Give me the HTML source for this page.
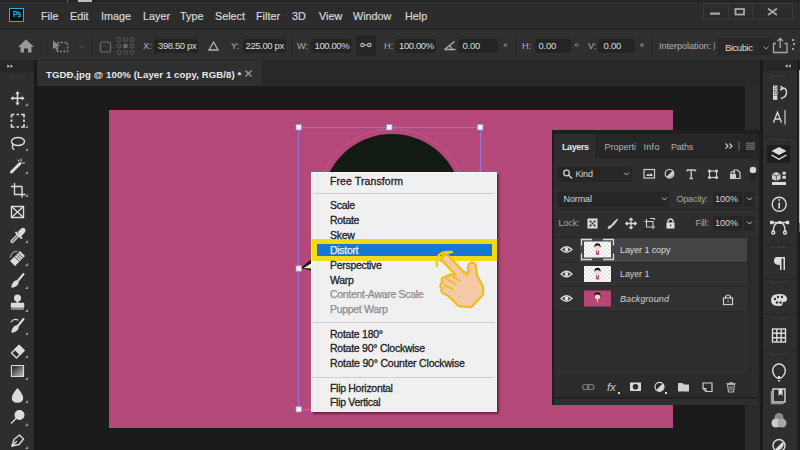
<!DOCTYPE html>
<html><head><meta charset="utf-8">
<style>
*{margin:0;padding:0;box-sizing:border-box}
html,body{width:800px;height:450px;overflow:hidden;background:#1d1d1d;font-family:"Liberation Sans",sans-serif}
.a{position:absolute}
.t{position:absolute;white-space:pre;line-height:1}
#menubar{left:0;top:0;width:800px;height:29px;background:#2c2c2c}
#optbar{left:0;top:29px;width:800px;height:31px;background:#2f2f2f;border-top:1px solid #232323}
#tabbar{left:37px;top:60px;width:723px;height:26px;background:#282828}
#tab{left:37px;top:61px;width:225px;height:25px;background:#303030}
#toolbar{left:0;top:60px;width:34px;height:390px;background:#2e2e2e}
#canvas{left:37px;top:86px;width:708px;height:364px;background:#1b1b1b}
#pink{left:109px;top:110px;width:564px;height:317.5px;background:#b44878}
#rstrip{left:763px;top:60px;width:34px;height:390px;background:#2e2e2e}
.mi{color:#d8d8d8;font-size:10.8px;-webkit-text-stroke:0.2px #d8d8d8}
.ot{color:#b0b0b0;font-size:9.2px}
.inp{position:absolute;background:#242424;border-radius:2px}
.iv{color:#dcdcdc;font-size:9.5px}
</style></head><body>
<div id="menubar" class="a"></div>
<div class="a" style="left:0;top:0;width:800px;height:2px;background:#242424"></div>
<div class="a" style="left:78px;top:0;width:14px;height:1.5px;background:#bdbdbd"></div>
<div class="a" style="left:67px;top:0;width:1px;height:2px;background:#777"></div>
<div id="optbar" class="a"></div>
<div id="toolbar" class="a"></div>
<div id="tabbar" class="a"></div>
<div id="tab" class="a"></div>
<div id="canvas" class="a"></div>
<div id="pink" class="a"></div>
<div id="rstrip" class="a"></div>

<!-- menubar -->
<div class="a" style="left:9px;top:7.8px;width:15px;height:14px;background:#03141f;border:1.5px solid #2bb0d8"></div>
<div class="t" style="left:12.6px;top:10.2px;color:#40c4ec;font-size:9.3px;letter-spacing:-0.4px;transform:scaleX(0.78);transform-origin:0 0;-webkit-text-stroke:0.2px #40c4ec">Ps</div>
<div class="t mi" style="left:41px;top:10.9px">File</div>
<div class="t mi" style="left:70px;top:10.9px">Edit</div>
<div class="t mi" style="left:101px;top:10.9px">Image</div>
<div class="t mi" style="left:143px;top:10.9px">Layer</div>
<div class="t mi" style="left:180px;top:10.9px">Type</div>
<div class="t mi" style="left:215px;top:10.9px">Select</div>
<div class="t mi" style="left:256px;top:10.9px">Filter</div>
<div class="t mi" style="left:292px;top:10.9px">3D</div>
<div class="t mi" style="left:319px;top:10.9px">View</div>
<div class="t mi" style="left:353px;top:10.9px">Window</div>
<div class="t mi" style="left:405px;top:10.9px">Help</div>


<!-- options bar -->
<svg class="a" style="left:0;top:29px" width="800" height="31">
 <g fill="none" stroke="#2a2a2a" stroke-width="1">
  <line x1="47.5" y1="4" x2="47.5" y2="27"/><line x1="91.5" y1="4" x2="91.5" y2="27"/>
  <line x1="292.5" y1="4" x2="292.5" y2="27"/><line x1="515.5" y1="4" x2="515.5" y2="27"/><line x1="651.5" y1="4" x2="651.5" y2="27"/>
 </g>
 <!-- home -->
 <path d="M18 18 L26 10.5 L34 18 L31.5 18 L31.5 23.5 L28 23.5 L28 19.5 L24 19.5 L24 23.5 L20.5 23.5 L20.5 18 Z" fill="#9a9a9a"/>
 <!-- transform icon -->
 <g fill="none" stroke="#8a8a8a" stroke-width="1.3">
  <rect x="57.5" y="13.5" width="10" height="9" stroke-dasharray="2 1.5"/>
 </g>
 <path d="M53 11.5 L60 17 L56.5 17.5 L58.5 21.5 L57 22 L55 18.5 L53 20.5 Z" fill="#8a8a8a"/>
 <path d="M79.5 16.5 L81.5 18.5 L83.5 16.5" fill="none" stroke="#5c5c5c" stroke-width="1"/>
 <!-- checkbox -->
 <rect x="100.5" y="13" width="10" height="10" rx="2" fill="none" stroke="#6a6a6a" stroke-width="1.2"/>
 <!-- ref point grid -->
 <g fill="none" stroke="#5a5a5a" stroke-width="1">
  <circle cx="119" cy="10.5" r="2"/><circle cx="125.5" cy="10.5" r="2"/><circle cx="132" cy="10.5" r="2"/>
  <circle cx="119" cy="17" r="2"/><circle cx="132" cy="17" r="2"/>
  <circle cx="119" cy="23.5" r="2"/><circle cx="125.5" cy="23.5" r="2"/><circle cx="132" cy="23.5" r="2"/>
 </g>
 <rect x="123.5" y="15" width="4" height="4" fill="#6a6a6a"/>
 <!-- triangle -->
 <path d="M213.5 13 L218 21 L209 21 Z" fill="none" stroke="#b0b0b0" stroke-width="1.3"/>
 <!-- link btn -->
 <rect x="356" y="6" width="20" height="21" fill="#242424"/>
 <g fill="none" stroke="#b8b8b8" stroke-width="1.2"><circle cx="362.5" cy="16" r="1.7"/><circle cx="369.3" cy="16" r="1.7"/><line x1="364" y1="16" x2="368" y2="16"/></g>
 <!-- angle icon -->
 <path d="M444.5 20.5 L455.5 20.5 M444.5 20.5 L454.5 12.5 M449.5 16.5 Q451.5 18 451.5 20.5" fill="none" stroke="#b0b0b0" stroke-width="1.3"/>
 <!-- degree -->
 <g fill="none" stroke="#8a8a8a" stroke-width="1"><circle cx="505.5" cy="16" r="1.3"/><circle cx="576.5" cy="16" r="1.3"/><circle cx="642" cy="16" r="1.3"/></g>
 <!-- dropdown bicubic -->
 <rect x="717.5" y="9" width="55" height="17" rx="2" fill="#282828"/>
 <path d="M763.5 17.5 L766 20 L768.5 17.5" fill="none" stroke="#9a9a9a" stroke-width="1"/>
 <path d="M713.5 13 Q716 15 714 17 M713.5 21 Q716 19 714 17" fill="none" stroke="#8a8a8a" stroke-width="1"/>
 <!-- share -->
 <path d="M776 14.5 L773.5 14.5 L773.5 23.5 L787 23.5 L787 14.5 L784.5 14.5 M780.2 19 L780.2 9.5 M777.5 12 L780.2 9.3 L783 12" fill="none" stroke="#a8a8a8" stroke-width="1.3"/>
 <g fill="#a0a0a0"><rect x="792" y="10" width="2" height="2"/><rect x="793" y="14" width="2" height="2"/><rect x="792" y="19" width="2" height="2"/></g>
</svg>
<div class="inp" style="left:154px;top:39px;width:44px;height:14px"></div>
<div class="inp" style="left:243px;top:39px;width:43px;height:14px"></div>
<div class="inp" style="left:311px;top:39px;width:40px;height:14px"></div>
<div class="inp" style="left:396px;top:39px;width:40px;height:14px"></div>
<div class="inp" style="left:459px;top:39px;width:39px;height:14px"></div>
<div class="inp" style="left:535px;top:39px;width:36px;height:14px"></div>
<div class="inp" style="left:598px;top:39px;width:37px;height:14px"></div>
<div class="t ot" style="left:143px;top:42.1px">X:</div>
<div class="t ot" style="left:231px;top:42.1px">Y:</div>
<div class="t ot" style="left:297px;top:42.1px">W:</div>
<div class="t ot" style="left:384px;top:42.1px">H:</div>
<div class="t ot" style="left:522px;top:42.1px">H:</div>
<div class="t ot" style="left:588px;top:42.1px">V:</div>
<div class="t iv" style="left:158px;top:41.3px;letter-spacing:-0.38px">398.50 px</div>
<div class="t iv" style="left:245.5px;top:41.3px;letter-spacing:-0.38px">225.00 px</div>
<div class="t iv" style="left:314.5px;top:41.3px;letter-spacing:-0.38px">100.00%</div>
<div class="t iv" style="left:399px;top:41.3px;letter-spacing:-0.38px">100.00%</div>
<div class="t iv" style="left:462.5px;top:41.3px;letter-spacing:-0.25px">0.00</div>
<div class="t iv" style="left:538.5px;top:41.3px;letter-spacing:-0.25px">0.00</div>
<div class="t iv" style="left:603.5px;top:41.3px;letter-spacing:-0.25px">0.00</div>
<div class="t ot" style="left:659px;top:41.8px;letter-spacing:-0.08px">Interpolation:</div>
<div class="t iv" style="left:725px;top:42.5px;letter-spacing:-0.45px">Bicubic</div>

<!-- window controls -->
<svg class="a" style="left:680px;top:0" width="120" height="29" viewBox="680 0 120 29">
 <rect x="703.5" y="3.5" width="89" height="15.5" fill="none" stroke="#3a3a3a" stroke-width="1"/>
 <line x1="728.5" y1="4" x2="728.5" y2="19" stroke="#383838"/><line x1="752.5" y1="4" x2="752.5" y2="19" stroke="#383838"/>
 <rect x="710" y="12.5" width="10" height="2.2" fill="#a8a8a8"/>
 <rect x="735.5" y="9" width="8.5" height="5.5" fill="none" stroke="#a8a8a8" stroke-width="1.8"/>
 <path d="M768 8.5 L777 15 M777 8.5 L768 15" stroke="#a8a8a8" stroke-width="1.6"/>
</svg>
<!-- toolbar -->
<div class="a" style="left:0;top:60px;width:34px;height:12px;background:#262626"></div>
<div class="a" style="left:34px;top:60px;width:3px;height:390px;background:#1a1a1a"></div>
<svg class="a" style="left:0;top:60px" width="36" height="390" viewBox="0 60 36 390">
 <path d="M7.3 64.5 L9.8 66.2 L7.3 67.9 Z M10.5 64.5 L13 66.2 L10.5 67.9 Z" fill="#c4c4c4"/>
 <g stroke="#434343" stroke-width="1" stroke-dasharray="1 1"><path d="M10 76.5 H26"/></g>
 <g fill="none" stroke="#dcdcdc" stroke-width="1.4" stroke-linecap="round" stroke-linejoin="round">
  <!-- move -->
  <path d="M17.5 93 L17.5 103.5 M12 98.2 L23 98.2" stroke-width="1.6"/>
  <path d="M17.5 91 L15.3 93.8 L19.7 93.8 Z M17.5 105.5 L15.3 102.7 L19.7 102.7 Z M10.5 98.2 L13.3 96 L13.3 100.4 Z M24.5 98.2 L21.7 96 L21.7 100.4 Z" fill="#dcdcdc" stroke="none"/>
  <!-- marquee -->
  <path d="M11.5 114.5 L14.5 114.5 M16.5 114.5 L19 114.5 M21 114.5 L24 114.5 L24 117.5 M24 119.5 L24 122 M24 124 L24 127 L21 127 M19 127 L16.5 127 M14.5 127 L11.5 127 L11.5 124 M11.5 122 L11.5 119.5 M11.5 117.5 L11.5 114.5" stroke-width="1.7" stroke-linecap="butt" stroke-linejoin="miter"/>
  <!-- lasso -->
  <ellipse cx="18" cy="141.5" rx="6.5" ry="4"/>
  <path d="M13 144 Q11.5 148 14 149.5"/>
  <!-- wand -->
  <path d="M11.5 172 L20 163.5" stroke-width="3"/>
  <path d="M21 159 L21 161 M22.5 163 L24.5 163 M18 160 L18.8 161" stroke-width="1.1"/>
  <!-- crop -->
  <path d="M14.5 183.5 L14.5 194.5 L25 194.5 M11.5 186.5 L22 186.5 L22 197"/>
  <!-- frame -->
  <rect x="11.5" y="206.5" width="12" height="11"/>
  <path d="M11.5 206.5 L23.5 217.5 M23.5 206.5 L11.5 217.5"/>
  <!-- eyedropper -->
  <path d="M19.5 235.5 L12.5 242.5 Q11 242.5 11 241 L18 234" stroke-width="1.3"/>
  <path d="M16 232.5 L21.5 238 M19 232 L22 229 Q23.5 228 24.5 229.5 Q25 231 24 232 L21 235 Z" fill="#dcdcdc" stroke-width="1.8"/>
  <!-- healing -->
  <path d="M12.5 263.5 L22.5 253.5" stroke-width="7" stroke-linecap="butt"/>
  <path d="M10.5 257 Q12 251 17 251.5" stroke-width="1" stroke-dasharray="1.2 1"/>
  <!-- brush -->
  <path d="M23.5 274 L17 282" stroke-width="2"/>
  <path d="M16.5 281 Q13 282 12 287 Q16 287 18 283 Z" fill="#dcdcdc"/>
  <!-- stamp -->
  <circle cx="17.5" cy="298" r="2.8" fill="#dcdcdc"/>
  <path d="M17.5 300 L17.5 303" stroke-width="2"/>
  <rect x="11.5" y="303.5" width="12" height="3.5" fill="#dcdcdc"/>
  <path d="M11.5 309 L23.5 309" stroke-width="1.1"/>
  <!-- history brush -->
  <path d="M23.5 319 L17 327" stroke-width="2"/>
  <path d="M16.5 326 Q13 327 12 332 Q16 332 18 328 Z" fill="#dcdcdc"/>
  <path d="M11 322 Q14 318 18 320" stroke-width="1.1"/>
  <!-- eraser -->
  <path d="M11.5 353 L19 345.5 L24 350.5 L16.5 358 Z"/>
  <path d="M15 349.5 L20 354.5 L24 350.5 L19 345.5 Z" fill="#dcdcdc"/>
  <!-- gradient -->
  <rect x="11.5" y="365.5" width="12" height="11" stroke-width="1.2"/>
  <!-- drop -->
  <path d="M17.5 389 Q12.5 395 12.5 398 Q12.5 402 17.5 402 Q22.5 402 22.5 398 Q22.5 395 17.5 389 Z" fill="#dcdcdc"/>
  <!-- dodge -->
  <circle cx="19.5" cy="415" r="4.3" fill="#dcdcdc"/>
  <path d="M16.5 418 L11.5 423"/>
  <!-- pen -->
  <path d="M12 446 L14 439.5 L19.5 435 L23.5 439 L19 444.5 Z"/>
  <path d="M12 446 L16.5 441.5"/>
 </g>
 <g stroke="#323232" stroke-width="0.9"><path d="M14.5 256.5 L19.5 261.5 M16.3 254.7 L21.3 259.7 M18.1 252.9 L23.1 257.9"/></g>
 <defs><linearGradient id="gr" x1="0" y1="0" x2="1" y2="1"><stop offset="0" stop-color="#1e1e1e"/><stop offset="1" stop-color="#bdbdbd"/></linearGradient></defs>
 <rect x="12" y="366" width="11" height="10" fill="url(#gr)"/>
 <g fill="#9a9a9a">
  <path d="M28 106 L28 103 L25 106 Z"/><path d="M28 128 L28 125 L25 128 Z"/><path d="M28 151 L28 148 L25 151 Z"/><path d="M28 174 L28 171 L25 174 Z"/>
  <path d="M28 197 L28 194 L25 197 Z"/><path d="M28 243 L28 240 L25 243 Z"/><path d="M28 266 L28 263 L25 266 Z"/><path d="M28 289 L28 286 L25 289 Z"/>
  <path d="M28 312 L28 309 L25 312 Z"/><path d="M28 335 L28 332 L25 335 Z"/><path d="M28 358 L28 355 L25 358 Z"/><path d="M28 380 L28 377 L25 380 Z"/>
  <path d="M28 403 L28 400 L25 403 Z"/><path d="M28 426 L28 423 L25 426 Z"/><path d="M28 449 L28 446 L25 449 Z"/>
 </g>
</svg>
<!-- tab close -->
<svg class="a" style="left:244px;top:69px" width="10" height="10"><path d="M1.5 1.5 L7.5 7.5 M7.5 1.5 L1.5 7.5" stroke="#a0a0a0" stroke-width="1.2"/></svg>
<!-- canvas scrollbar col -->
<div class="a" style="left:745px;top:86px;width:15px;height:364px;background:#2a2a2a"></div>
<div class="a" style="left:760px;top:60px;width:3px;height:390px;background:#1a1a1a"></div>
<!-- right strip -->
<div class="a" style="left:763px;top:60px;width:34px;height:11px;background:#262626"></div>
<div class="a" style="left:797px;top:60px;width:3px;height:390px;background:#1e1e1e"></div>
<div class="a" style="left:798.5px;top:70px;width:1.5px;height:153px;background:#c4c4c4"></div>
<div class="a" style="left:798.5px;top:223px;width:1.5px;height:9px;background:#3d6fa8"></div>
<div class="a" style="left:767px;top:144.5px;width:23px;height:18px;background:#1e1e1e"></div>
<svg class="a" style="left:760px;top:60px" width="40" height="390" viewBox="760 60 40 390">
 <path d="M787.5 64.3 L785 66 L787.5 67.7 Z M790.7 64.3 L788.2 66 L790.7 67.7 Z" fill="#c4c4c4"/>
 <g stroke="#262626" stroke-width="1"><line x1="763" y1="137" x2="797" y2="137"/><line x1="763" y1="244.5" x2="797" y2="244.5"/><line x1="763" y1="279" x2="797" y2="279"/><line x1="763" y1="314.5" x2="797" y2="314.5"/><line x1="763" y1="350" x2="797" y2="350"/></g>
 <g stroke="#474747" stroke-width="1" stroke-dasharray="1 1"><path d="M771 76.5 H787 M771 139.5 H787 M771 247.5 H787 M771 282.5 H787 M771 318.5 H787 M771 354.5 H787"/></g>
 <g fill="#dcdcdc" stroke="none">
  <!-- history -->
  <rect x="773" y="95.5" width="4.3" height="4.3"/><circle cx="775.2" cy="87.8" r="1"/><circle cx="775.2" cy="92.8" r="1"/>
 </g>
 <g fill="none" stroke="#dcdcdc" stroke-width="1.4">
  <rect x="773.5" y="86" width="3.5" height="3.6" stroke-width="1"/><rect x="773.5" y="91" width="3.5" height="3.6" stroke-width="1"/>
  <path d="M781 88.5 Q786 86.5 786.5 92 Q786.5 97 781 98.5"/>
  <path d="M780.5 86 L783 88.5 L780 90"/>
  <!-- A| -->
  <path d="M773.5 122.5 L777.5 112.3 L781.5 122.5 M775 119 L780 119" stroke-width="1.3"/>
  <line x1="785" y1="110" x2="785" y2="124.5" stroke-width="1.1"/>
  <!-- info -->
  <circle cx="779.2" cy="204.2" r="7"/>
  <line x1="779.2" y1="202.5" x2="779.2" y2="208.5" stroke-width="1.6"/>
  <!-- path -->
  <path d="M773.3 231 Q773.5 222.5 779.5 222.5 Q785 222.5 785 231"/>
  <line x1="772" y1="222.5" x2="787" y2="222.5"/>
  <circle cx="773.3" cy="232.5" r="1.5"/><circle cx="785" cy="232.5" r="1.5"/>
  <!-- grid -->
  <rect x="772.5" y="329" width="13" height="13"/>
  <path d="M776.8 329 L776.8 342 M781.2 329 L781.2 342 M772.5 333.3 L785.5 333.3 M772.5 337.7 L785.5 337.7"/>
  <!-- bulb -->
  <path d="M777 378 Q771.5 374 773 368.5 Q775 364 779 364 Q783 364 785 368.5 Q786.5 374 781 378 Z"/>
  <!-- book -->
  <rect x="773" y="389" width="12" height="13"/>
  <path d="M771.5 391 L771.5 403.5 L783.5 403.5" stroke="#9a9a9a"/>
  <!-- half circle -->
  <circle cx="779" cy="445.5" r="6"/>
 </g>
 <g fill="#dcdcdc">
  <circle cx="779.2" cy="200" r="1"/>
  <rect x="770" y="220.8" width="3.4" height="3.4"/><rect x="785.8" y="220.8" width="3.4" height="3.4"/><rect x="778.2" y="221" width="2.8" height="3"/>
  <!-- layers icon -->
  <path d="M779 147 L786.5 151 L779 155 L771.5 151 Z"/>
  <path d="M772 154.5 L779 158.5 L786 154.5 L787 155.5 L779 160 L771 155.5 Z"/>
  <!-- 3d -->
  <path d="M772 174 L776.3 172 L780.6 174 L780.6 179 L776.3 181 L772 179 Z" fill="#cfcfcf"/>
  <path d="M772 174 L776.3 176 L780.6 174 M776.3 176 L776.3 181" fill="none" stroke="#3a3a3a" stroke-width="0.8"/>
  <rect x="782.5" y="171.8" width="3.3" height="2.7"/><rect x="782.5" y="175.8" width="3.3" height="3"/><rect x="772" y="182" width="14" height="3"/>
  <!-- pilcrow -->
  <path d="M777 257 L785 257 L785 270 L783.5 270 L783.5 258.5 L781.5 258.5 L781.5 270 L780 270 L780 265 Q774 265 774 261 Q774 257 777 257 Z"/>
  <!-- palette -->
  <path d="M779 294 Q787 294 787 299 Q787 302 784 302 Q782 302 782.5 304 Q782.5 306 779 306 Q771 306 771 300 Q771 294 779 294 Z"/>
  <rect x="778" y="376" width="2" height="3"/>
  <path d="M777.5 380 L780.5 380 L779 382 Z"/>
 </g>
 <g fill="#323232"><circle cx="775" cy="299" r="1.2"/><circle cx="778" cy="297" r="1.2"/><circle cx="782" cy="297" r="1.2"/><circle cx="777" cy="302.5" r="1.2"/><circle cx="780.5" cy="302.5" r="1.2"/></g>
 <path d="M778.5 389 L778.5 396 L780.5 394 L782.5 396 L782.5 389 Z" fill="#dcdcdc"/>
 <!-- color circles -->
 <g opacity="0.85"><circle cx="779" cy="417.5" r="4.5" fill="#9a9a9a"/><circle cx="776" cy="423" r="4.5" fill="#e8e8e8"/><circle cx="782" cy="423" r="4.5" fill="#bdbdbd"/></g>
 <path d="M775 449.5 L783 441.5 A6 6 0 0 1 775 449.5 Z" fill="#dcdcdc"/>
</svg>
<!-- tab -->
<div class="t" style="left:46px;top:70px;color:#e8e8e8;font-size:9.6px;font-weight:bold;letter-spacing:0.1px">TGDĐ.jpg @ 100% (Layer 1 copy, RGB/8) *</div>

<!-- layers panel -->
<div class="a" style="left:552px;top:130px;width:209px;height:275px;background:#1f1f1f"></div>
<div class="a" style="left:554px;top:133.5px;width:205px;height:264px;background:#2e2e2e"></div>
<div class="a" style="left:595px;top:133.5px;width:164px;height:25px;background:#262626"></div>
<div class="a" style="left:554px;top:374.5px;width:205px;height:23px;background:#2b2b2b"></div>
<div class="a" style="left:554px;top:397px;width:205px;height:1.5px;background:#222"></div>
<div class="a" style="left:554px;top:398.5px;width:205px;height:6px;background:#2e2e2e"></div>
<!-- rows -->
<div class="a" style="left:554px;top:237px;width:193px;height:74px;background:#313131"></div>
<div class="a" style="left:554px;top:236.5px;width:193px;height:1px;background:#262626"></div>
<div class="a" style="left:580px;top:237.5px;width:167px;height:24px;background:#444444"></div>
<div class="a" style="left:554px;top:261.5px;width:193px;height:1px;background:#292929"></div>
<div class="a" style="left:554px;top:286px;width:193px;height:1px;background:#292929"></div>
<div class="a" style="left:554px;top:310.5px;width:193px;height:1px;background:#292929"></div>
<div class="a" style="left:747px;top:237px;width:12px;height:137px;background:#2b2b2b"></div>
<!-- dropdowns / inputs -->
<div class="inp" style="left:557px;top:166.5px;width:75px;height:15px;background:#262626"></div>
<div class="inp" style="left:557px;top:191.5px;width:112px;height:15px;background:#262626"></div>
<div class="inp" style="left:713px;top:191.5px;width:30px;height:15px;background:#262626"></div>
<div class="inp" style="left:744px;top:191.5px;width:11px;height:15px;background:#262626"></div>
<div class="inp" style="left:713px;top:215.5px;width:30px;height:15px;background:#262626"></div>
<div class="inp" style="left:744px;top:215.5px;width:11px;height:15px;background:#262626"></div>
<div class="a" style="left:554px;top:186px;width:205px;height:1px;background:#2a2a2a"></div>
<div class="a" style="left:554px;top:209px;width:205px;height:1px;background:#2a2a2a"></div>
<div class="t" style="left:562px;top:143.4px;font-size:9px;color:#e6e6e6;font-weight:bold;letter-spacing:-0.4px">Layers</div>
<div class="t" style="left:604.5px;top:143.4px;font-size:9px;color:#b4b4b4;letter-spacing:0px">Properti</div>
<div class="t" style="left:643.5px;top:143.4px;font-size:9px;color:#b4b4b4;letter-spacing:0.3px">Info</div>
<div class="t" style="left:671px;top:143.4px;font-size:9px;color:#b4b4b4;letter-spacing:-0.2px">Paths</div>
<div class="t" style="left:575.5px;top:169.9px;font-size:9px;color:#d6d6d6;letter-spacing:-0.2px">Kind</div>
<div class="t" style="left:563.5px;top:194.9px;font-size:9px;color:#d6d6d6;letter-spacing:-0.1px">Normal</div>
<div class="t" style="left:676.5px;top:194.9px;font-size:9px;color:#a8a8a8;letter-spacing:-0.2px">Opacity:</div>
<div class="t" style="left:715px;top:194.9px;font-size:9px;color:#d6d6d6;letter-spacing:0px">100%</div>
<div class="t" style="left:558.5px;top:219.4px;font-size:9px;color:#a8a8a8;letter-spacing:-0.1px">Lock:</div>
<div class="t" style="left:695.5px;top:219.4px;font-size:9px;color:#a8a8a8;letter-spacing:-0.2px">Fill:</div>
<div class="t" style="left:715px;top:219.4px;font-size:9px;color:#d6d6d6;letter-spacing:0px">100%</div>
<div class="t" style="left:620px;top:245.9px;font-size:9px;color:#dcdcdc;letter-spacing:-0.1px">Layer 1 copy</div>
<div class="t" style="left:620px;top:270.4px;font-size:9px;color:#d0d0d0;letter-spacing:-0.1px">Layer 1</div>
<div class="t" style="left:620px;top:294.9px;font-size:9px;color:#d0d0d0;font-style:italic;letter-spacing:0.1px">Background</div>
<svg class="a" style="left:552px;top:130px" width="210" height="276" viewBox="552 130 210 276">
 <!-- header icons -->
 <path d="M725.5 143.5 L728 146 L725.5 148.5 M729.5 143.5 L732 146 L729.5 148.5" fill="none" stroke="#cfcfcf" stroke-width="1.1"/>
 <line x1="739" y1="141.5" x2="739" y2="150.5" stroke="#6e6e6e" stroke-width="1"/>
 <g fill="#6a6a6a"><rect x="746" y="142.5" width="9" height="1.3"/><rect x="746" y="144.5" width="9" height="1.3"/><rect x="746" y="146.5" width="9" height="1.3"/><rect x="746" y="148.5" width="9" height="1.3"/></g>
 <!-- kind row -->
 <circle cx="566.5" cy="173" r="2.8" fill="none" stroke="#d0d0d0" stroke-width="1.3"/>
 <line x1="568.5" y1="175" x2="572" y2="178.5" stroke="#d0d0d0" stroke-width="1.5"/>
 <path d="M624 172.5 L626.5 175 L629 172.5" fill="none" stroke="#bdbdbd" stroke-width="1"/>
 <rect x="644" y="169.5" width="10.5" height="8.5" fill="none" stroke="#cfcfcf" stroke-width="1.2"/>
 <path d="M646 176 L648 173.5 L649.5 175 L651 173 L653 176 Z" fill="#cfcfcf"/>
 <circle cx="669.5" cy="173.8" r="4.3" fill="none" stroke="#cfcfcf" stroke-width="1.2"/>
 <path d="M672.5 170.8 A4.3 4.3 0 0 1 666.5 176.8 Z" fill="#cfcfcf"/>
 <path d="M687 170 L695.5 170 M691.2 170 L691.2 178.5 M689.5 178.5 L693 178.5 M687 170 L687 171.5 M695.5 170 L695.5 171.5" fill="none" stroke="#cfcfcf" stroke-width="1.3"/>
 <rect x="709.5" y="171" width="7" height="6.5" fill="none" stroke="#cfcfcf" stroke-width="1.1"/>
 <g fill="#cfcfcf"><circle cx="709.5" cy="171" r="1.6"/><circle cx="716.5" cy="171" r="1.6"/><circle cx="709.5" cy="177.5" r="1.6"/><circle cx="716.5" cy="177.5" r="1.6"/></g>
 <path d="M734 170 L737.5 170 L740 172.5 L740 178.5 L734 178.5 Z" fill="none" stroke="#cfcfcf" stroke-width="1.2"/>
 <rect x="730" y="174" width="6" height="5" fill="#cfcfcf"/>
 <path d="M731 174 L731 172.5 Q733 170.5 735 172.5" fill="none" stroke="#cfcfcf" stroke-width="1.1"/>
 <rect x="749.5" y="166.5" width="7" height="15" rx="3.5" fill="#262626"/>
 <circle cx="753" cy="170" r="3.3" fill="#d8d8d8"/>
 <path d="M662 197.5 L664.5 200 L667 197.5" fill="none" stroke="#bdbdbd" stroke-width="1"/>
 <path d="M747 197.5 L749.5 200 L752 197.5" fill="none" stroke="#bdbdbd" stroke-width="1"/>
 <path d="M747 221.5 L749.5 224 L752 221.5" fill="none" stroke="#bdbdbd" stroke-width="1"/>
 <!-- lock row -->
 <rect x="587.5" y="218.5" width="10" height="10" fill="#e0e0e0"/>
 <g fill="#323232"><rect x="589.5" y="220.5" width="2" height="2"/><rect x="593.5" y="220.5" width="2" height="2"/><rect x="591.5" y="222.5" width="2" height="2"/><rect x="589.5" y="224.5" width="2" height="2"/><rect x="593.5" y="224.5" width="2" height="2"/></g>
 <path d="M617.5 218.5 Q614 221 611 225 L612.5 226.5 Q616 223 618 219.5 Z" fill="#d8d8d8"/>
 <path d="M611 225 Q608 225.5 607.5 229 Q610.5 229 612 227 Z" fill="#d8d8d8"/>
 <path d="M631 218.5 L631 228.5 M626 223.5 L636 223.5 M629.3 220 L631 218.3 L632.7 220 M629.3 227 L631 228.7 L632.7 227 M627.5 221.8 L625.8 223.5 L627.5 225.2 M634.5 221.8 L636.2 223.5 L634.5 225.2" fill="none" stroke="#d8d8d8" stroke-width="1.3"/>
 <path d="M646.5 219 L646.5 227 L655 227 M644.5 221.5 L653 221.5 L653 229 M650 218.5 L654.5 218.5 L654.5 220" fill="none" stroke="#d0d0d0" stroke-width="1.1"/>
 <rect x="666.5" y="222.5" width="8" height="6" fill="#e0e0e0"/>
 <path d="M668 222.5 L668 220.5 Q670.5 217.5 673 220.5 L673 222.5" fill="none" stroke="#e0e0e0" stroke-width="1.3"/>
 <rect x="670" y="224.5" width="1.2" height="2" fill="#323232"/>
 <!-- eyes -->
 <g fill="none" stroke="#dcdcdc" stroke-width="1.3">
  <path d="M561 249.5 Q566.5 244 572 249.5 Q566.5 255 561 249.5 Z"/>
  <path d="M561 274 Q566.5 268.5 572 274 Q566.5 279.5 561 274 Z"/>
  <path d="M561 298.5 Q566.5 293 572 298.5 Q566.5 304 561 298.5 Z"/>
 </g>
 <g fill="#dcdcdc"><circle cx="566.5" cy="249.5" r="1.9"/><circle cx="566.5" cy="274" r="1.9"/><circle cx="566.5" cy="298.5" r="1.9"/></g>
 <!-- thumbnails -->
 <defs><pattern id="chk" x="584" y="241" width="4" height="4" patternUnits="userSpaceOnUse"><rect width="4" height="4" fill="#ffffff"/><rect width="2" height="2" fill="#e2e2e2"/><rect x="2" y="2" width="2" height="2" fill="#e2e2e2"/></pattern>
 <g id="fig"><circle cx="0" cy="1.2" r="3" fill="#1a1a1a"/><ellipse cx="0" cy="3" rx="2.6" ry="2.4" fill="#f0dcc0"/><rect x="-1.5" y="5.5" width="3" height="4.5" fill="#c04a78"/><rect x="-0.5" y="5.5" width="1" height="2" fill="#f4f4f4"/></g></defs>
 <rect x="584" y="241.5" width="27" height="16" fill="url(#chk)"/>
 <rect x="584" y="266" width="27" height="16" fill="url(#chk)"/>
 <rect x="584" y="290.5" width="27" height="16" fill="#b84477"/>
 <use href="#fig" x="597.5" y="245"/><use href="#fig" x="597.5" y="269.5"/><use href="#fig" x="597.5" y="294"/>
 <g fill="none" stroke="#dadada" stroke-width="1.3">
  <path d="M581.5 245.5 L581.5 239.5 L592 239.5 M603 239.5 L613.5 239.5 L613.5 245.5 M613.5 253.5 L613.5 259.5 L603 259.5 M592 259.5 L581.5 259.5 L581.5 253.5"/>
 </g>
 <!-- bg lock -->
 <rect x="723.5" y="298" width="9" height="6.5" fill="none" stroke="#d0d0d0" stroke-width="1.2"/>
 <path d="M725.5 298 L725.5 296.5 Q728 293.5 730.5 296.5 L730.5 298" fill="none" stroke="#d0d0d0" stroke-width="1.2"/>
 <rect x="727.5" y="300.5" width="1.2" height="1.5" fill="#d0d0d0"/>
 <!-- bottom icons -->
 <g fill="none" stroke="#7a7a7a" stroke-width="1.2">
  <rect x="582.5" y="384.5" width="6.5" height="5" rx="2.5"/><rect x="587.5" y="384.5" width="6.5" height="5" rx="2.5"/>
 </g>
 <text x="607" y="391" font-family="Liberation Sans" font-style="italic" font-size="11.5" fill="#cdcdcd" letter-spacing="-0.3">fx</text>
 <rect x="618" y="392" width="2" height="2" fill="#e0e0e0"/>
 <rect x="630" y="382.5" width="11" height="8.5" fill="#d8d8d8"/>
 <circle cx="635.5" cy="386.8" r="2.8" fill="#2d2d2d"/>
 <circle cx="659.5" cy="386.8" r="4.5" fill="none" stroke="#d8d8d8" stroke-width="1.2"/>
 <path d="M662.7 383.6 A4.5 4.5 0 0 1 656.3 390 Z" fill="#d8d8d8"/>
 <rect x="665" y="392" width="2" height="2" fill="#e0e0e0"/>
 <path d="M678 383 L682.5 383 L684 384.5 L689 384.5 L689 391.5 L678 391.5 Z" fill="#cfcfcf"/>
 <path d="M703 383 L712 383 L712 391.5 L706 391.5 L703 388.5 Z" fill="none" stroke="#cfcfcf" stroke-width="1.2"/>
 <path d="M703 388.5 L706 388.5 L706 391.5" fill="none" stroke="#cfcfcf" stroke-width="1"/>
 <path d="M727.5 384.5 L734.5 384.5 L733.5 392 L728.5 392 Z" fill="none" stroke="#b0b0b0" stroke-width="1.2"/>
 <path d="M726.5 383.5 L735.5 383.5 M729.5 382.5 L732.5 382.5 M730 386 L730 390.5 M732 386 L732 390.5" fill="none" stroke="#b0b0b0" stroke-width="1"/>
</svg>
<!-- figure on canvas -->
<svg class="a" style="left:0;top:0" width="800" height="450">
 <circle cx="392" cy="204" r="75" fill="none" stroke="#c45a8a" stroke-width="1"/>
 <circle cx="392" cy="204" r="70" fill="#121a14"/>
 <path d="M301 268 L311 259.5 L311 270.5 Z" fill="#101010"/>
 <path d="M303.5 268 L311 263.5 L311 268.5 Z" fill="#f3ead0"/>
 <g fill="none" stroke="#9870d0" stroke-width="1.4">
  <rect x="298.5" y="127.5" width="182" height="282"/>
 </g>
 <g fill="#f4f6ff" stroke="#a08ad8" stroke-width="0.8">
  <rect x="296" y="124.5" width="5.5" height="5.5"/><rect x="386.5" y="124.5" width="5.5" height="5.5"/><rect x="477.5" y="124.5" width="5.5" height="5.5"/>
  <rect x="296" y="265.8" width="5.5" height="5.5"/><rect x="296" y="406.5" width="5.5" height="5.5"/>
 </g>
</svg>
<!-- context menu -->
<div id="cm" class="a" style="left:311px;top:172px;width:186px;height:240px;background:#f0f0f0;box-shadow:2px 2px 2px rgba(0,0,0,.45)"></div>
<div class="a" style="left:311px;top:172px;width:186px;height:1px;background:#fafafa"></div>
<div class="a" style="left:311px;top:172px;width:1px;height:240px;background:#fafafa"></div>
<div class="a" style="left:317px;top:173px;width:1px;height:238px;background:#e9e9e9"></div>
<div class="a" style="left:313px;top:193px;width:182px;height:1.3px;background:#cfcfcf"></div>
<div class="a" style="left:312px;top:322px;width:183px;height:1px;background:#cfcfcf"></div>
<div class="a" style="left:312px;top:377px;width:183px;height:1px;background:#cfcfcf"></div>
<div class="a" style="left:312px;top:238.5px;width:185px;height:22px;background:#f0dc14"></div>
<div class="a" style="left:317px;top:244px;width:175px;height:12px;background:#1877d2"></div>
<div class="t" style="left:330px;top:176.1px;font-size:10.5px;color:#1e1e1e;letter-spacing:0.1px;-webkit-text-stroke:0.3px #1e1e1e">Free Transform</div>
<div class="t" style="left:330px;top:200.4px;font-size:10.5px;color:#1e1e1e;letter-spacing:-0.3px;-webkit-text-stroke:0.3px #1e1e1e">Scale</div>
<div class="t" style="left:330px;top:214.5px;font-size:10.5px;color:#1e1e1e;letter-spacing:-0.3px;-webkit-text-stroke:0.3px #1e1e1e">Rotate</div>
<div class="t" style="left:330px;top:229.5px;font-size:10.5px;color:#1e1e1e;letter-spacing:-0.3px;-webkit-text-stroke:0.3px #1e1e1e">Skew</div>
<div class="t" style="left:330px;top:244.8px;font-size:10.5px;color:#e8f2ff;letter-spacing:-0.3px;-webkit-text-stroke:0.25px #e8f2ff">Distort</div>
<div class="t" style="left:330px;top:259.5px;font-size:10.5px;color:#1e1e1e;letter-spacing:-0.3px;-webkit-text-stroke:0.3px #1e1e1e">Perspective</div>
<div class="t" style="left:330px;top:274.5px;font-size:10.5px;color:#1e1e1e;letter-spacing:-0.3px;-webkit-text-stroke:0.3px #1e1e1e">Warp</div>
<div class="t" style="left:330px;top:289.0px;font-size:10.5px;color:#8c8c8c;letter-spacing:-0.3px;-webkit-text-stroke:0.25px #8c8c8c">Content-Aware Scale</div>
<div class="t" style="left:330px;top:304.0px;font-size:10.5px;color:#8c8c8c;letter-spacing:-0.3px;-webkit-text-stroke:0.25px #8c8c8c">Puppet Warp</div>
<div class="t" style="left:330px;top:328.5px;font-size:10.5px;color:#1e1e1e;letter-spacing:-0.25px;-webkit-text-stroke:0.3px #1e1e1e">Rotate 180°</div>
<div class="t" style="left:330px;top:343.3px;font-size:10.5px;color:#1e1e1e;letter-spacing:-0.25px;-webkit-text-stroke:0.3px #1e1e1e">Rotate 90° Clockwise</div>
<div class="t" style="left:330px;top:358.0px;font-size:10.5px;color:#1e1e1e;letter-spacing:-0.2px;-webkit-text-stroke:0.3px #1e1e1e">Rotate 90° Counter Clockwise</div>
<div class="t" style="left:330px;top:382.7px;font-size:10.5px;color:#1e1e1e;letter-spacing:-0.3px;-webkit-text-stroke:0.3px #1e1e1e">Flip Horizontal</div>
<div class="t" style="left:330px;top:397.3px;font-size:10.5px;color:#1e1e1e;letter-spacing:-0.3px;-webkit-text-stroke:0.3px #1e1e1e">Flip Vertical</div>
<!-- hand -->
<svg class="a" style="left:430px;top:246px" width="60" height="66" viewBox="430 246 60 66">
 <g fill="none" stroke="#f0cc1c" stroke-width="2.3" stroke-linecap="round">
  <path d="M437 266 Q434.5 250 452 252"/>
  <path d="M441 261 Q440.5 253 449.5 252.8"/>
 </g>
 <g stroke="#f0be1a" stroke-linecap="round" stroke-linejoin="round">
  <line x1="446" y1="259" x2="463" y2="277" stroke-width="10"/>
  <line x1="472" y1="266.5" x2="474" y2="282" stroke-width="10"/>
  <path d="M458 275 L474 272 L482 287 L482 294 L471 306 L459 305 L444 290 L443 284 L447 277 Z" fill="#f0be1a" stroke-width="4.4"/>
  <line x1="445" y1="280" x2="456" y2="283" stroke-width="8.6"/>
  <line x1="443.5" y1="285.5" x2="455" y2="289" stroke-width="8.6"/>
  <line x1="444.5" y1="290.5" x2="455" y2="295" stroke-width="8.6"/>
 </g>
 <g stroke="#f6c9a6" stroke-linecap="round" stroke-linejoin="round">
  <line x1="446" y1="259" x2="463" y2="277" stroke-width="5.6"/>
  <line x1="472" y1="266.5" x2="474" y2="282" stroke-width="5.4"/>
  <line x1="445" y1="280" x2="456" y2="283" stroke-width="4.4"/>
  <line x1="443.5" y1="285.5" x2="455" y2="289" stroke-width="4.4"/>
  <line x1="444.5" y1="290.5" x2="455" y2="295" stroke-width="4.4"/>
  <path d="M458 275 L474 272 L482 287 L482 294 L471 306 L459 305 L444 290 L443 284 L447 277 Z" fill="#f6c9a6" stroke-width="0"/>
 </g>
 <g stroke="#f0be1a" stroke-width="1.7" stroke-linecap="round" fill="none">
  <path d="M449.5 274 L460 281"/>
  <path d="M446.5 279 L456 284.5"/>
  <path d="M444.5 285 L453 289.5"/>
  <path d="M466.5 276 L467.5 273"/>
 </g>
</svg>
</body></html>
